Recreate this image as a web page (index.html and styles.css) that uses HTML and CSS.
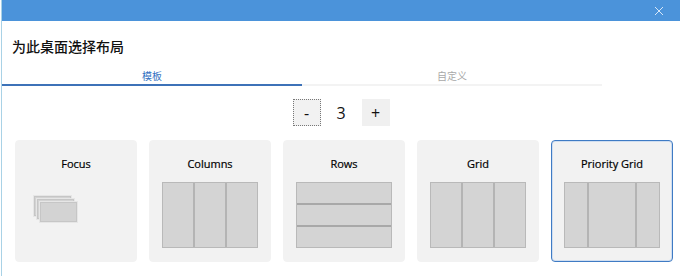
FILE: index.html
```html
<!DOCTYPE html>
<html lang="zh-CN">
  <head>
    <meta charset="UTF-8" />
    <title>为此桌面选择布局</title>
    <link rel="stylesheet" href="styles.css">
  </head>
  <body>
    <div class="window">
      <div class="titlebar">
        <svg class="close" width="10" height="10" viewBox="0 0 10 10">
          <path d="M1 1 L9 9 M9 1 L1 9" stroke="#d6e6f8" stroke-width="1" fill="none" />
        </svg>
      </div>

      <h1 class="heading">为此桌面选择布局</h1>

      <div class="tabs">
        <div class="tab active">模板</div>
        <div class="tab">自定义</div>
      </div>

      <div class="stepper">
        <button class="step focused">-</button>
        <span class="count">3</span>
        <button class="step">+</button>
      </div>

      <div class="cards">
        <div class="card">
          <div class="card-title">Focus</div>
          <div class="focus">
            <div class="sheet"></div>
            <div class="sheet s2"></div>
            <div class="sheet s3"></div>
          </div>
        </div>
        <div class="card">
          <div class="card-title">Columns</div>
          <div class="preview cols">
            <div></div><div></div><div></div>
          </div>
        </div>
        <div class="card">
          <div class="card-title">Rows</div>
          <div class="preview rows">
            <div></div><div></div><div></div>
          </div>
        </div>
        <div class="card">
          <div class="card-title">Grid</div>
          <div class="preview cols">
            <div></div><div></div><div></div>
          </div>
        </div>
        <div class="card selected">
          <div class="card-title">Priority Grid</div>
          <div class="preview priority">
            <div></div><div></div><div></div>
          </div>
        </div>
      </div>
    </div>
  </body>
</html>
```

FILE: styles.css
```css
html, body {
  margin: 0;
  padding: 0;
  background: #fff;
}
body {
  width: 680px;
  height: 276px;
  overflow: hidden;
  font-family: "Open Sans", "Noto Sans", "Noto Sans CJK SC", sans-serif;
  color: #1a1a1a;
  padding-left: 1px;
  box-sizing: border-box;
}
.window {
  height: 276px;
  border-left: 1px solid #a9d2e6;
  background: #fff;
}
.titlebar {
  height: 21px;
  background: #4b93da;
  display: flex;
  justify-content: flex-end;
  align-items: center;
  padding-right: 16px;
}
.close {
  display: block;
}
.heading {
  margin: 15px 0 0 10px;
  font-family: "Noto Sans CJK SC", sans-serif;
  font-size: 14px;
  font-weight: 500;
  line-height: 20px;
  color: #111;
}
.tabs {
  display: flex;
  width: 600px;
  margin-top: 12px;
}
.tab {
  flex: 1;
  text-align: center;
  font-family: "Noto Sans CJK SC", sans-serif;
  font-size: 10px;
  line-height: 16px;
  color: #a8a8a8;
  border-bottom: 2px solid #f3f3f3;
}
.tab.active {
  color: #3372c2;
  border-bottom-color: #3d72b8;
}
.stepper {
  display: flex;
  justify-content: center;
  align-items: center;
  margin-top: 13px;
  height: 27px;
}
.step {
  width: 28px;
  height: 27px;
  border: 1px solid transparent;
  background: #f0f0f0;
  font-family: "Open Sans", sans-serif;
  font-size: 16px;
  line-height: 1;
  color: #111;
  padding: 0;
}
.step.focused {
  border: 1px dotted #777;
  background: #f2f2f2;
}
.count {
  width: 41px;
  text-align: center;
  font-size: 16px;
  color: #111;
}
.cards {
  display: flex;
  gap: 12px;
  margin: 14px 0 0 13px;
}
.card {
  width: 122px;
  height: 122px;
  box-sizing: border-box;
  background: #f2f2f2;
  border: 1px solid #f2f2f2;
  border-radius: 4px;
  padding-top: 15px;
}
.card.selected {
  border: 1px solid #3f7bc4;
  box-shadow: inset 0 0 0 1px #d0def0;
}
.card-title {
  text-align: center;
  font-size: 11px;
  font-weight: 400;
  line-height: 16px;
  color: #000;
  -webkit-text-stroke: 0.2px #000;
}
.preview {
  width: 96px;
  height: 66px;
  margin: 10px auto 0;
  box-sizing: border-box;
  border: 1px solid #b9b9b9;
  background: #d4d4d4;
  display: flex;
}
.preview > div {
  flex: 1;
}
.cols > div + div,
.priority > div + div {
  border-left: 2px solid #b4b4b4;
}
.rows {
  flex-direction: column;
}
.rows > div + div {
  border-top: 2px solid #a8a8a8;
}
.priority > div {
  flex: 0 0 22px;
}
.priority > div:nth-child(2) {
  flex: 1;
}
.focus {
  position: relative;
  width: 45px;
  height: 28px;
  margin: 24px 0 0 18px;
}
.sheet {
  position: absolute;
  left: 0;
  top: 0;
  width: 37px;
  height: 20px;
  box-sizing: border-box;
  background: #d3d3d3;
  border: 1px solid #c6c6c6;
  box-shadow: 0 0 0 1px #e6e6e6;
}
.s2 {
  left: 3px;
  top: 3px;
}
.s3 {
  left: 6px;
  top: 6px;
}
```
